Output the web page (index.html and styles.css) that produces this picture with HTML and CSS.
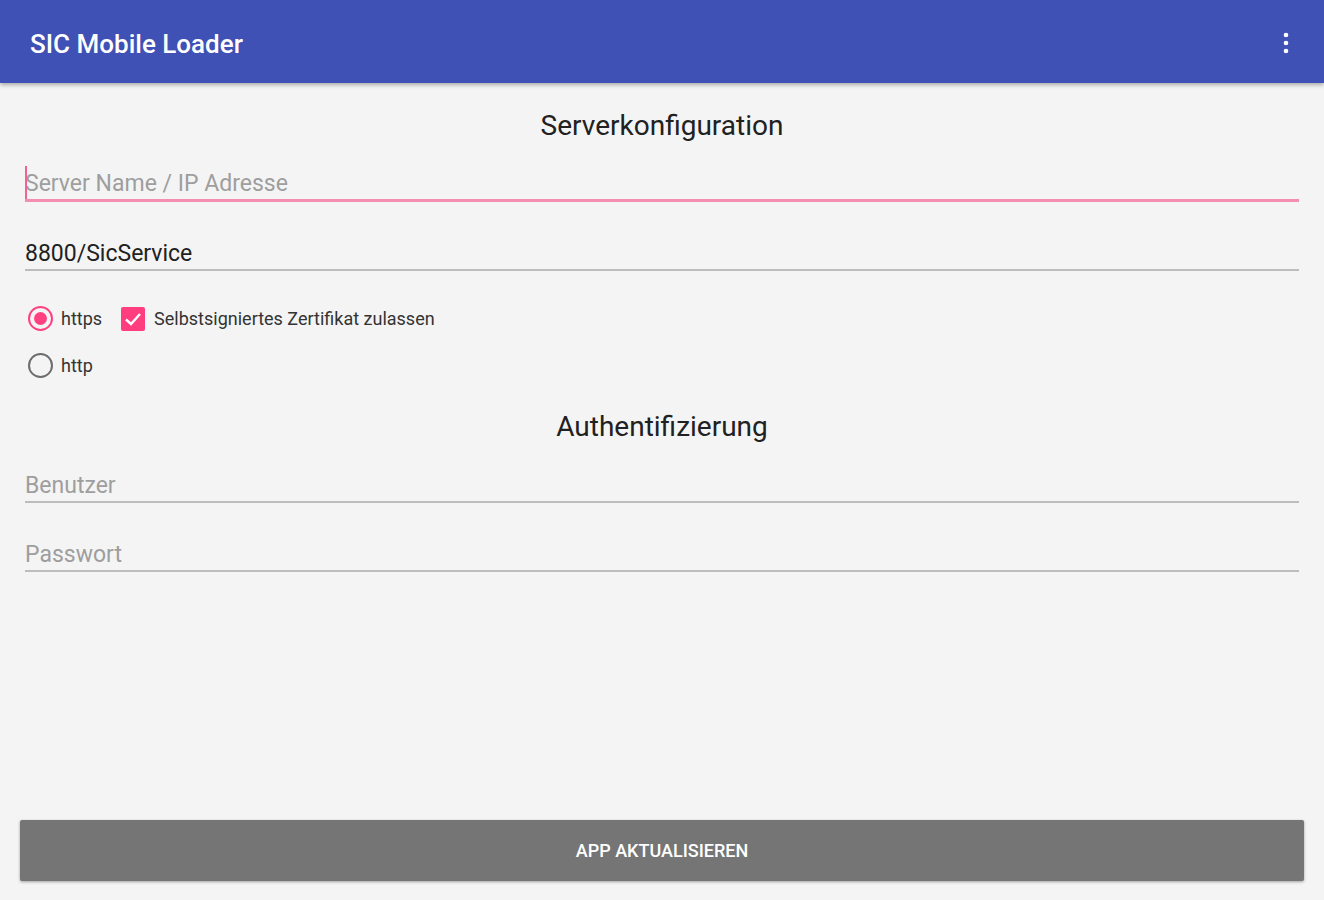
FILE: index.html
```html
<!DOCTYPE html>
<html lang="de">
<head>
<meta charset="utf-8">
<title>SIC Mobile Loader</title>
<link rel="stylesheet" href="styles.css">
</head>
<body>
<div class="app">
  <header class="toolbar">
    <h1 class="title">SIC Mobile Loader</h1>
    <div class="overflow">
      <svg width="8" height="22" viewBox="0 0 8 22"><circle cx="4" cy="3" r="2.3" fill="#fff"/><circle cx="4" cy="11" r="2.3" fill="#fff"/><circle cx="4" cy="19" r="2.3" fill="#fff"/></svg>
    </div>
  </header>
  <main class="content">
    <h2 class="section">Serverkonfiguration</h2>
    <div class="field focused">
      <span class="cursor"></span>
      <span class="placeholder">Server Name / IP Adresse</span>
    </div>
    <div class="field">
      <span class="value">8800/SicService</span>
    </div>
    <div class="options">
      <div class="row">
        <span class="radio checked"><span class="dot"></span></span>
        <span class="label">https</span>
        <span class="checkbox">
          <svg width="24" height="24" viewBox="0 0 24 24"><rect x="0" y="0" width="24" height="24" rx="2" fill="#ff3d7f"/><path d="M5 12.5 L10 17 L19 7" fill="none" stroke="#fff" stroke-width="2.4"/></svg>
        </span>
        <span class="label">Selbstsigniertes Zertifikat zulassen</span>
      </div>
      <div class="row">
        <span class="radio"></span>
        <span class="label">http</span>
      </div>
    </div>
    <h2 class="section auth">Authentifizierung</h2>
    <div class="field">
      <span class="placeholder">Benutzer</span>
    </div>
    <div class="field">
      <span class="placeholder">Passwort</span>
    </div>
    <div class="spacer"></div>
    <button class="update">APP AKTUALISIEREN</button>
  </main>
</div>
</body>
</html>
```
FILE: styles.css
```css
html, body {
  margin: 0;
  padding: 0;
  height: 100%;
}
body {
  background: #f4f4f4;
  font-family: Roboto, "Noto Sans", "Liberation Sans", sans-serif;
  color: #212121;
}
.app {
  display: flex;
  flex-direction: column;
  height: 900px;
}
.toolbar {
  height: 83px;
  background: #3f51b5;
  display: flex;
  align-items: center;
  justify-content: space-between;
  padding: 0 30px;
  box-shadow: 0 2px 4px rgba(0,0,0,0.3);
  flex: none;
  position: relative;
  z-index: 1;
}
.title {
  margin: 0;
  color: #fff;
  font-size: 26px;
  font-weight: 500;
  letter-spacing: 0;
  padding-top: 4px;
}
.overflow {
  display: flex;
  margin-right: 4px;
  padding-top: 2px;
}
.content {
  flex: 1;
  display: flex;
  flex-direction: column;
  padding: 0 25px 19px 25px;
}
.section {
  margin: 0;
  text-align: center;
  font-size: 28px;
  font-weight: 400;
  color: #212121;
  padding-top: 26px;
  height: 34px;
  line-height: 34px;
}
.section.auth {
  padding-top: 32px;
}
.field {
  position: relative;
  height: 34px;
  border-bottom: 2px solid #bdbdbd;
  display: flex;
  align-items: flex-end;
  margin-top: 33px;
  font-size: 23px;
  line-height: 30px;
}
.section + .field {
  margin-top: 23px;
}
.field.focused {
  border-bottom: 3px solid #f48fb1;
  height: 33px;
}
.cursor {
  position: absolute;
  left: 0;
  top: 0;
  width: 2px;
  height: 33px;
  background: #f06292;
}
.placeholder {
  color: #9e9e9e;
}
.value {
  color: #212121;
}
.options {
  display: flex;
  flex-direction: column;
  gap: 22px;
  margin-top: 35px;
  padding-left: 3px;
}
.row {
  display: flex;
  align-items: center;
  height: 25px;
  font-size: 18px;
  color: #212121;
}
.radio {
  box-sizing: border-box;
  width: 25px;
  height: 25px;
  border-radius: 50%;
  border: 2px solid #6d6d6d;
  display: flex;
  align-items: center;
  justify-content: center;
  margin-right: 8px;
}
.radio.checked {
  border-color: #ff4081;
}
.radio .dot {
  width: 13px;
  height: 13px;
  border-radius: 50%;
  background: #ff4081;
}
.checkbox {
  display: flex;
  margin-left: 19px;
  margin-right: 9px;
}
.label {
  color: #333;
}
.spacer {
  flex: 1;
}
.update {
  margin: 0 -5px;
  height: 61px;
  background: #757575;
  color: #fff;
  border: none;
  border-radius: 2px;
  font-family: Roboto, "Noto Sans", "Liberation Sans", sans-serif;
  font-size: 18px;
  font-weight: 500;
  box-shadow: 0 1px 3px rgba(0,0,0,0.35);
}
```
